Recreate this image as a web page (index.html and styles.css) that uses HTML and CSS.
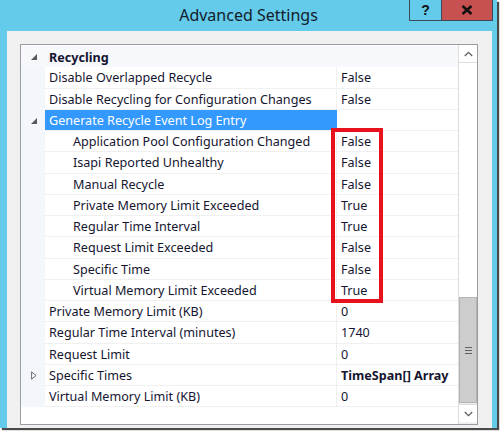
FILE: index.html
```html
<!DOCTYPE html>
<html>
<head>
<meta charset="utf-8">
<link rel="stylesheet" href="styles.css">
</head>
<body>
<div class="window">
  <div class="titlebar">
    <div class="title">Advanced Settings</div>
    <div class="buttons">
      <div class="btn help">?</div>
      <div class="btn close">
        <svg width="12" height="10" viewBox="0 0 12 10"><path d="M1.5 1 L10.5 9 M10.5 1 L1.5 9" stroke="#111" stroke-width="2.6"/></svg>
      </div>
    </div>
  </div>
  <div class="panel">
    <div class="grid">
      <div class="rows">
        <div class="row category">
          <div class="margin"><span class="exp"></span></div>
          <div class="name">Recycling</div>
          <div class="value"></div>
        </div>
        <div class="row"><div class="margin"></div><div class="name">Disable Overlapped Recycle</div><div class="value">False</div></div>
        <div class="row"><div class="margin"></div><div class="name">Disable Recycling for Configuration Changes</div><div class="value">False</div></div>
        <div class="row selected"><div class="margin"><span class="exp"></span></div><div class="name">Generate Recycle Event Log Entry</div><div class="value"></div></div>
        <div class="boxgroup">
          <div class="row sub"><div class="margin"></div><div class="name">Application Pool Configuration Changed</div><div class="value">False</div></div>
          <div class="row sub"><div class="margin"></div><div class="name">Isapi Reported Unhealthy</div><div class="value">False</div></div>
          <div class="row sub"><div class="margin"></div><div class="name">Manual Recycle</div><div class="value">False</div></div>
          <div class="row sub"><div class="margin"></div><div class="name">Private Memory Limit Exceeded</div><div class="value">True</div></div>
          <div class="row sub"><div class="margin"></div><div class="name">Regular Time Interval</div><div class="value">True</div></div>
          <div class="row sub"><div class="margin"></div><div class="name">Request Limit Exceeded</div><div class="value">False</div></div>
          <div class="row sub"><div class="margin"></div><div class="name">Specific Time</div><div class="value">False</div></div>
          <div class="row sub"><div class="margin"></div><div class="name">Virtual Memory Limit Exceeded</div><div class="value">True</div></div>
          <div class="redbox"></div>
        </div>
        <div class="row"><div class="margin"></div><div class="name">Private Memory Limit (KB)</div><div class="value">0</div></div>
        <div class="row"><div class="margin"></div><div class="name">Regular Time Interval (minutes)</div><div class="value">1740</div></div>
        <div class="row"><div class="margin"></div><div class="name">Request Limit</div><div class="value">0</div></div>
        <div class="row"><div class="margin"><svg class="col" width="6" height="9" viewBox="0 0 6 9"><path d="M0.6 0.8 L5 4.5 L0.6 8.2 Z" fill="none" stroke="#6a6a6a" stroke-width="1"/></svg></div><div class="name">Specific Times</div><div class="value bold">TimeSpan[] Array</div></div>
        <div class="row"><div class="margin"></div><div class="name">Virtual Memory Limit (KB)</div><div class="value">0</div></div>
      </div>
      <div class="scrollbar">
        <div class="arrow up"><svg width="9" height="6" viewBox="0 0 9 6"><path d="M0.8 5 L4.5 1.3 L8.2 5" fill="none" stroke="#606060" stroke-width="1.3"/></svg></div>
        <div class="track top"></div>
        <div class="thumb"><span class="grip"></span></div>
        <div class="arrow down"><svg width="9" height="6" viewBox="0 0 9 6"><path d="M0.8 1 L4.5 4.7 L8.2 1" fill="none" stroke="#606060" stroke-width="1.3"/></svg></div>
      </div>
    </div>
  </div>
</div>
</body>
</html>
```
FILE: styles.css
```css
html, body {
  margin: 0;
  padding: 0;
  background: #ffffff;
}
body {
  width: 502px;
  height: 432px;
  overflow: hidden;
  font-family: "Noto Sans", "Open Sans", sans-serif;
}
.window {
  width: 497px;
  height: 428px;
  background: #64cbea;
  box-shadow: 2px 2px 1px #4a4a4a;
  display: flex;
  flex-direction: column;
  overflow: hidden;
}
.titlebar {
  height: 31px;
  display: grid;
  flex: none;
}
.title {
  grid-area: 1 / 1;
  text-align: center;
  font-size: 16px;
  color: #13202c;
  padding-top: 4px;
}
.buttons {
  grid-area: 1 / 1;
  justify-self: end;
  align-self: start;
  display: flex;
  margin-right: 4px;
}
.btn {
  height: 20px;
  display: flex;
  align-items: center;
  justify-content: center;
  border: 1px solid #3b4a55;
  border-top: none;
}
.help {
  width: 31px;
  background: #64cbea;
  font-weight: bold;
  font-size: 14px;
  color: #111;
  font-family: "Liberation Sans", sans-serif;
  border-right: none;
}
.close {
  width: 50px;
  background: #c75050;
}
.panel {
  flex: 1;
  margin: 0 5px 0 7px;
  background: #f0f0f0;
  padding: 13px 14px 0 13px;
}
.grid {
  height: 379px;
  border: 1px solid #9a9da3;
  background: #ffffff;
  display: flex;
}
.rows {
  width: 437px;
  padding-top: 1px;
  font-size: 12.6px;
  color: #151530;
}
.row {
  height: 21.25px;
  display: grid;
  grid-template-columns: 24px 292px 121px;
}
.row > div {
  display: flex;
  align-items: center;
  white-space: nowrap;
  overflow: hidden;
  padding-top: 1px;
}
.margin {
  background: #f3f6fb;
  justify-content: center;
}
.name {
  padding-left: 4px;
  border-bottom: 1px solid #f0f0f0;
  border-right: 1px solid #f0f0f0;
}
.value {
  padding-left: 4px;
  border-bottom: 1px solid #f0f0f0;
}
.sub .name {
  padding-left: 28px;
}
.category > div {
  background: #f6f8fc;
  border: none;
  font-weight: bold;
}
.selected .name {
  background: #3399ff;
  color: #ffffff;
  border-right-color: #3399ff;
}
.bold {
  font-weight: bold;
}
.exp {
  width: 0;
  height: 0;
  border-style: solid;
  border-width: 0 0 6px 6px;
  border-color: transparent transparent #5a5a5a transparent;
  margin-left: 2px;
}
.col {
  margin-left: 1px;
}
.boxgroup {
  position: relative;
}
.redbox {
  position: absolute;
  left: 310px;
  top: -3px;
  width: 44px;
  height: 167px;
  border: 4px solid #e8121c;
}
.scrollbar {
  width: 18px;
  border-left: 1px solid #dcdcdc;
  background: #f0f0f0;
  display: flex;
  flex-direction: column;
}
.arrow {
  height: 17px;
  background: #ffffff;
  display: flex;
  align-items: center;
  justify-content: center;
  flex: none;
}
.arrow.up {
  border-bottom: 1px solid #dcdcdc;
}
.arrow.down {
  border-top: 1px solid #dcdcdc;
  margin-bottom: 2px;
}
.track.top {
  height: 234px;
  background: #ffffff;
}
.thumb {
  flex: 1;
  background: #cdcdcd;
  border: 1px solid #b4b4b4;
  margin: 0 0 1px 0;
  display: flex;
  align-items: center;
  justify-content: center;
}
.grip {
  width: 7px;
  height: 5px;
  border-top: 1px solid #606060;
  border-bottom: 1px solid #606060;
  position: relative;
}
.grip::after {
  content: "";
  position: absolute;
  left: 0;
  right: 0;
  top: 2px;
  border-top: 1px solid #606060;
}
```
